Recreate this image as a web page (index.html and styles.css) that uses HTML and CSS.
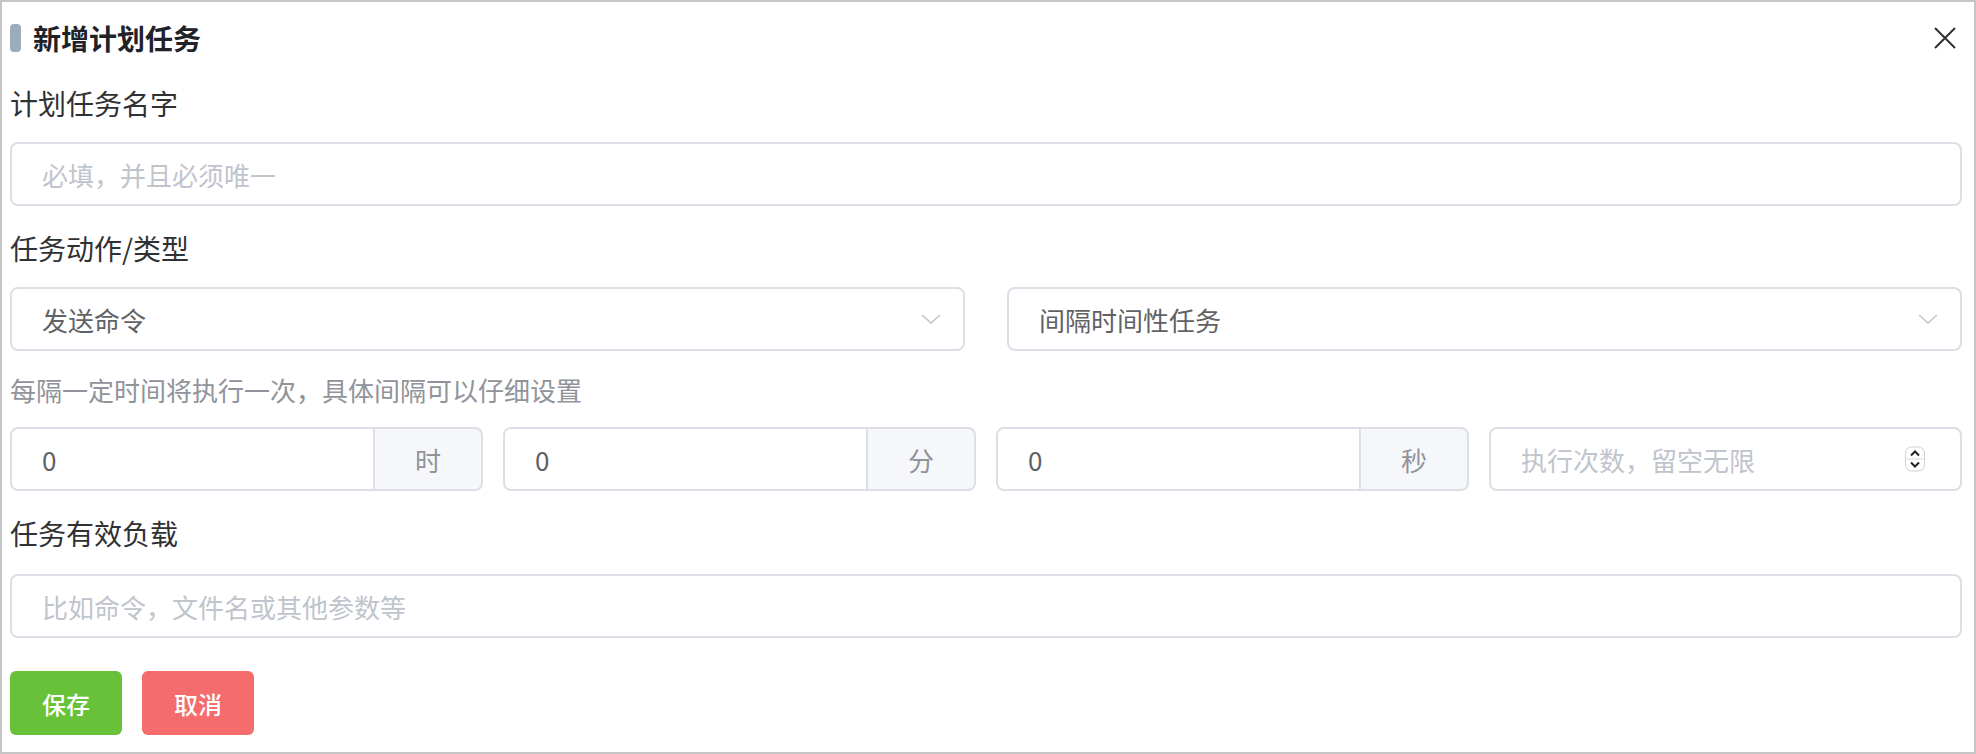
FILE: index.html
```html
<!DOCTYPE html>
<html lang="zh-CN">
<head>
<meta charset="utf-8">
<title>新增计划任务</title>
<link rel="stylesheet" href="styles.css">
</head>
<body>
<div class="dialog">
  <div class="header">
    <div class="title"><span class="title-bar"></span>新增计划任务</div>
    <svg class="close" width="22" height="22" viewBox="0 0 22 22"><path d="M1 1L21 21M21 1L1 21" stroke="#303133" stroke-width="2" fill="none"/></svg>
  </div>

  <div class="label first">计划任务名字</div>
  <div class="control input"><input type="text" placeholder="必填，并且必须唯一"></div>

  <div class="label">任务动作/类型</div>
  <div class="control selects">
    <div class="input select"><span class="value">发送命令</span><svg class="chev" width="20" height="10" viewBox="0 0 20 10"><polyline points="1,1 10,9 19,1" stroke="#c0c4cc" stroke-width="1.6" fill="none"/></svg></div>
    <div class="input select"><span class="value">间隔时间性任务</span><svg class="chev" width="20" height="10" viewBox="0 0 20 10"><polyline points="1,1 10,9 19,1" stroke="#c0c4cc" stroke-width="1.6" fill="none"/></svg></div>
  </div>

  <div class="hint">每隔一定时间将执行一次，具体间隔可以仔细设置</div>
  <div class="row4">
    <div class="group"><div class="input"><input type="text" value="0"></div><div class="addon">时</div></div>
    <div class="group"><div class="input"><input type="text" value="0"></div><div class="addon">分</div></div>
    <div class="group"><div class="input"><input type="text" value="0"></div><div class="addon">秒</div></div>
    <div class="input number"><input type="text" placeholder="执行次数，留空无限"><svg class="spin" width="22" height="26" viewBox="0 0 22 26"><rect x="1.5" y="1" width="19" height="24" rx="6" fill="#fff" stroke="#cfd1d6" stroke-width="1"/><line x1="2.5" y1="13" x2="19.5" y2="13" stroke="#d8d8d8" stroke-width="1"/><polyline points="7,9.5 11,5.5 15,9.5" stroke="#222" stroke-width="2" fill="none"/><polyline points="7,16.5 11,20.5 15,16.5" stroke="#222" stroke-width="2" fill="none"/></svg></div>
  </div>

  <div class="label">任务有效负载</div>
  <div class="control payload input"><input type="text" placeholder="比如命令，文件名或其他参数等"></div>

  <div class="actions">
    <button class="btn save">保存</button>
    <button class="btn cancel">取消</button>
  </div>
</div>
</body>
</html>
```

FILE: styles.css
```css
* { box-sizing: border-box; }
html, body { margin: 0; padding: 0; background: #fff; }
body {
  width: 1976px;
  height: 754px;
  overflow: hidden;
  font-family: "Noto Sans CJK SC", "Noto Sans", sans-serif;
}
.dialog {
  height: 754px;
  border: 2px solid #c6c6c6;
  padding: 0 12px 0 8px;
}
.header {
  margin-top: 16px;
  height: 40px;
  display: flex;
  align-items: center;
  justify-content: space-between;
}
.title {
  display: flex;
  align-items: center;
  font-size: 28px;
  font-weight: 700;
  color: #1f2329;
}
.title-bar {
  width: 11px;
  height: 28px;
  border-radius: 4px;
  background: #9eabb9;
  margin-right: 12px;
}
.close { margin-right: 6px; }

.label {
  font-size: 28px;
  line-height: 42px;
  color: #303133;
  margin-top: 21px;
}
.label.first { margin-top: 24px; }
.control { margin-top: 18px; }
.control.payload { margin-top: 20px; }

.input {
  display: flex;
  align-items: center;
  height: 64px;
  border: 2px solid #dcdfe6;
  border-radius: 8px;
  padding: 0 30px;
  background: #fff;
}
.input input {
  flex: 1;
  min-width: 0;
  border: 0;
  outline: 0;
  padding: 0;
  background: transparent;
  font-family: inherit;
  font-size: 26px;
  color: #606266;
}
.input input::placeholder { color: #c0c4cc; }

.selects {
  display: grid;
  grid-template-columns: 1fr 1fr;
  gap: 42px;
}
.select { justify-content: space-between; padding-right: 22px; }
.select .value { font-size: 26px; color: #606266; }

.hint {
  margin-top: 19px;
  font-size: 26px;
  line-height: 40px;
  color: #909399;
}
.row4 {
  margin-top: 17px;
  display: grid;
  grid-template-columns: repeat(4, 1fr);
  gap: 20px;
}
.group { display: flex; height: 64px; min-width: 0; }
.group .input { flex: 1; min-width: 0; border-radius: 8px 0 0 8px; }
.addon {
  width: 108px;
  flex: none;
  border: 2px solid #dcdfe6;
  border-left: 0;
  border-radius: 0 8px 8px 0;
  background: #f5f7fa;
  color: #909399;
  font-size: 26px;
  display: flex;
  align-items: center;
  justify-content: center;
}
.number { padding-right: 34px; }
.spin { flex: none; }

.actions {
  margin-top: 33px;
  display: flex;
  gap: 20px;
}
.btn {
  width: 112px;
  height: 64px;
  border: 0;
  border-radius: 6px;
  color: #fff;
  font-family: inherit;
  font-size: 24px;
  font-weight: 500;
  padding: 0;
}
.btn.save { background: #67c23a; }
.btn.cancel { background: #f56c6c; }
```
